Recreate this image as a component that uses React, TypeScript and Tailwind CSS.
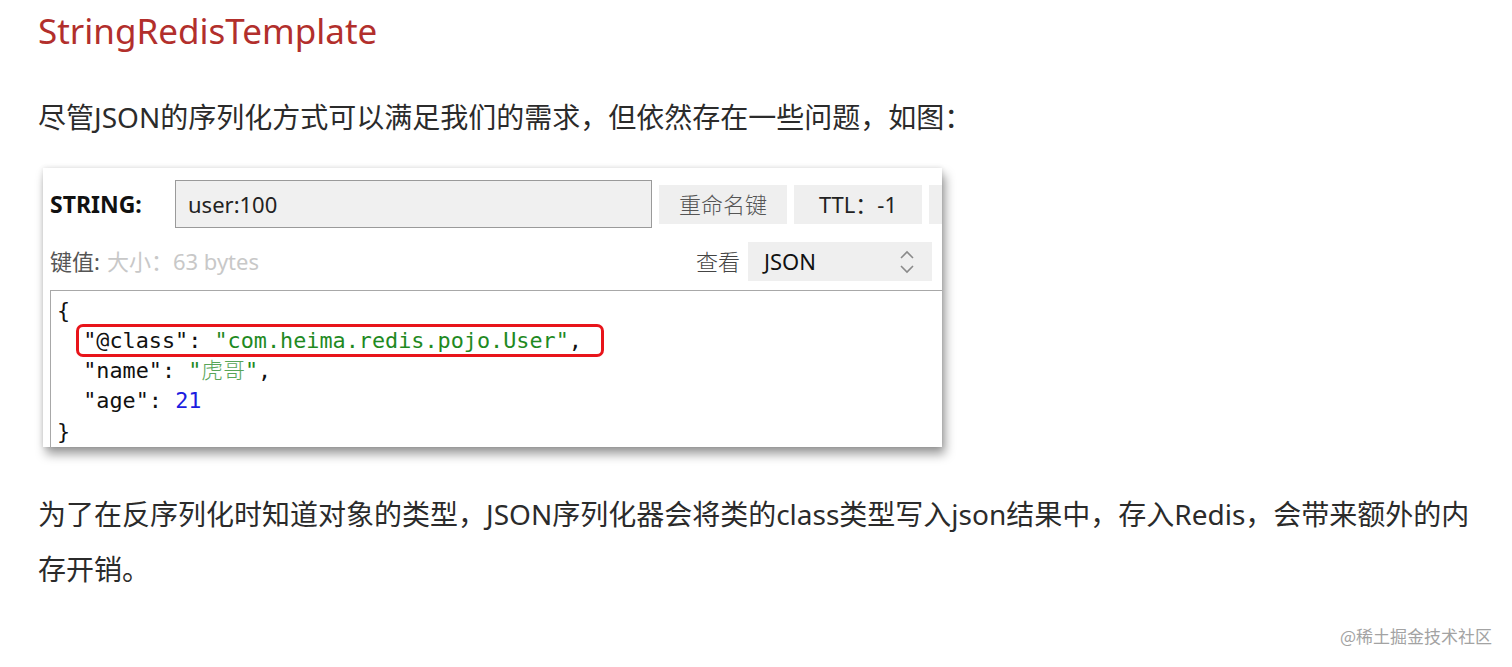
import React from "react";

const sans = "font-['Noto_Sans','Noto_Sans_CJK_SC',sans-serif]";

function Chevrons() {
  return (
    <svg width="16" height="26" viewBox="0 0 16 26" fill="none" stroke="#8a8a8a" strokeWidth="1.6">
      <path d="M2 9 L8 3 L14 9" />
      <path d="M2 17 L8 23 L14 17" />
    </svg>
  );
}

export default function App() {
  return (
    <div className={`relative w-[1512px] h-[667px] bg-white overflow-hidden ${sans}`}>
      <div className="pl-[38px] pt-[7px]">
        <h1 className="text-[35px] leading-[48px] text-[#b22f2c] font-normal">StringRedisTemplate</h1>
        <p className="mt-[42px] text-[28px] leading-[40px] text-[#2b2b2b]">
          尽管JSON的序列化方式可以满足我们的需求，但依然存在一些问题，如图：
        </p>

        <div className="ml-[5px] mt-[31px] w-[899px] h-[279px] bg-white overflow-hidden flex flex-col shadow-[3px_7px_10px_rgba(0,0,0,0.4),0_0_5px_rgba(0,0,0,0.12)]">
          <div className="flex items-center pt-[12px] pl-[7px]">
            <span className="w-[125px] shrink-0 text-[23px] font-bold text-[#111]">STRING:</span>
            <div className="w-[477px] h-[48px] shrink-0 bg-[#f0f0f0] border border-[#9a9a9a] flex items-center pl-[12px] text-[22px] text-[#222]">
              user:100
            </div>
            <div className="ml-[7px] w-[128px] h-[39px] shrink-0 bg-[#efefef] flex items-center justify-center text-[22px] text-[#555] font-light">
              重命名键
            </div>
            <div className="ml-[7px] w-[128px] h-[39px] shrink-0 bg-[#efefef] flex items-center justify-center text-[22px] text-[#222]">
              TTL：-1
            </div>
            <div className="ml-[7px] w-[128px] h-[39px] shrink-0 bg-[#efefef]" />
          </div>

          <div className="flex items-center mt-[14px] pl-[7px] pr-[10px]">
            <span className="text-[22px] text-[#555]">键值:</span>
            <span className="ml-[7px] text-[22px] text-[#c8c8c8]">大小：63 bytes</span>
            <div className="flex-1" />
            <span className="text-[22px] text-[#444] font-light">查看</span>
            <div className="ml-[8px] w-[184px] h-[39px] shrink-0 bg-[#efefef] flex items-center justify-between pl-[16px] pr-[17px]">
              <span className="text-[22px] text-[#111]">JSON</span>
              <Chevrons />
            </div>
          </div>

          <div className="mt-[9px] ml-[7px] flex-1 border-l border-t border-[#a8a8a8] pt-[5px] pl-[6px] font-['DejaVu_Sans_Mono','Noto_Sans_CJK_SC',monospace] text-[21.8px] leading-[30px] text-[#111] whitespace-pre">
            <div className="h-[30px]">{"{"}</div>
            <div className="h-[30px]">
              {"  "}
              <span className="relative">
                <span>"@class": </span>
                <span className="text-[#1f8a1f]">"com.heima.redis.pojo.User"</span>
                <span>,</span>
                <span className="absolute left-[-7px] right-[-22px] top-[-4px] bottom-[-4px] border-[3px] border-[#e8141a] rounded-[7px]" />
              </span>
            </div>
            <div className="h-[30px]">
              {"  "}"name": <span className="text-[#1f8a1f]">"<span className="font-['Noto_Sans_CJK_SC'] font-light leading-none text-[#58a558]">虎哥</span>"</span>,
            </div>
            <div className="h-[31px]">
              {"  "}"age": <span className="text-[#1c1ce0]">21</span>
            </div>
            <div className="h-[30px]">{"}"}</div>
          </div>
        </div>

        <p className="mt-[40px] text-[28px] leading-[55px] text-[#2b2b2b]">
          为了在反序列化时知道对象的类型，JSON序列化器会将类的class类型写入json结果中，存入Redis，会带来额外的内
          <br />
          存开销。
        </p>
      </div>

      <div className="absolute right-[20px] bottom-[19px] text-[17px] text-[#a3a3a3] font-['Noto_Sans_CJK_SC',sans-serif]">
        @稀土掘金技术社区
      </div>
    </div>
  );
}
